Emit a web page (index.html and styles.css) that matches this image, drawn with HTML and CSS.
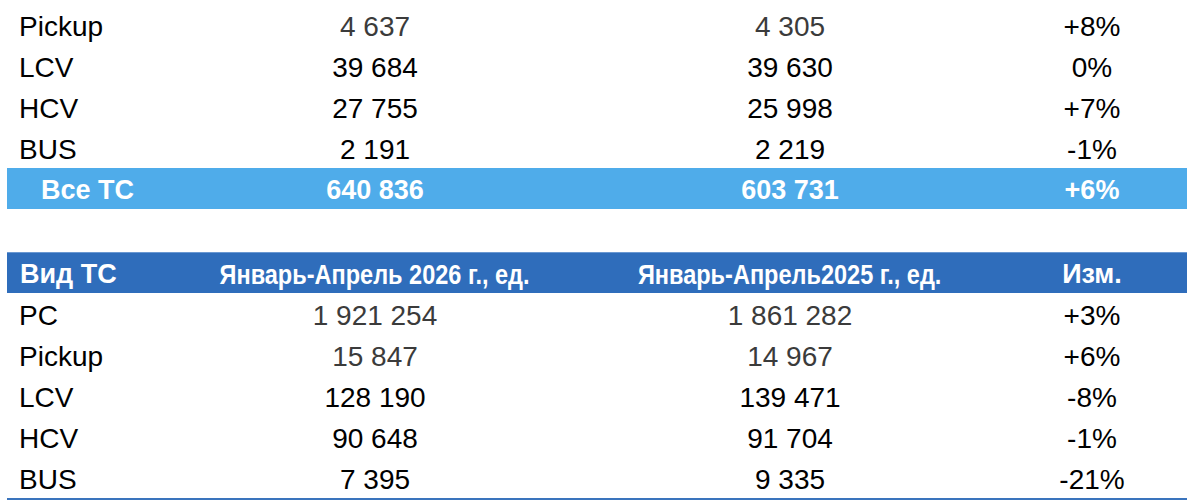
FILE: index.html
```html
<!DOCTYPE html>
<html lang="ru">
<head>
<meta charset="utf-8">
<title>Продажи ТС</title>
<link rel="stylesheet" href="styles.css">
</head>
<body>
<div class="page">
  <div class="table first">
    <div class="row"><div class="lbl">Pickup</div><div class="num grey">4 637</div><div class="num grey">4 305</div><div class="pct">+8%</div></div>
    <div class="row"><div class="lbl">LCV</div><div class="num">39 684</div><div class="num">39 630</div><div class="pct">0%</div></div>
    <div class="row"><div class="lbl">HCV</div><div class="num">27 755</div><div class="num">25 998</div><div class="pct">+7%</div></div>
    <div class="row"><div class="lbl">BUS</div><div class="num">2 191</div><div class="num">2 219</div><div class="pct">-1%</div></div>
    <div class="row total"><div class="lbl">Все ТС</div><div class="num">640 836</div><div class="num">603 731</div><div class="pct">+6%</div></div>
  </div>

  <div class="table second">
    <div class="row head"><div class="lbl">Вид ТС</div><div class="num"><span class="narrow">Январь-Апрель 2026 г., ед.</span></div><div class="num"><span class="narrow">Январь-Апрель2025 г., ед.</span></div><div class="pct">Изм.</div></div>
    <div class="row"><div class="lbl">PC</div><div class="num grey">1 921 254</div><div class="num grey">1 861 282</div><div class="pct">+3%</div></div>
    <div class="row"><div class="lbl">Pickup</div><div class="num grey">15 847</div><div class="num grey">14 967</div><div class="pct">+6%</div></div>
    <div class="row"><div class="lbl">LCV</div><div class="num">128 190</div><div class="num">139 471</div><div class="pct">-8%</div></div>
    <div class="row"><div class="lbl">HCV</div><div class="num">90 648</div><div class="num">91 704</div><div class="pct">-1%</div></div>
    <div class="row"><div class="lbl">BUS</div><div class="num">7 395</div><div class="num">9 335</div><div class="pct">-21%</div></div>
  </div>
</div>
</body>
</html>
```
FILE: styles.css
```css
html, body {
  margin: 0;
  padding: 0;
  background: #ffffff;
}

body {
  font-family: "Liberation Sans", Arial, Helvetica, sans-serif;
  color: #000000;
}

.page {
  width: 1180px;
  padding: 4px 0 0 7px;
  display: flex;
  flex-direction: column;
  gap: 43px;
}

.table {
  display: flex;
  flex-direction: column;
}

.second {
  border-bottom: 2px solid #3a74bd;
}

.row {
  display: grid;
  grid-template-columns: 180px 376px 454px 1fr;
  box-sizing: border-box;
  height: 41px;
  padding-top: 4px;
  font-size: 28px;
  line-height: 37px;
  white-space: nowrap;
}

.lbl {
  padding-left: 12px;
}

.num {
  text-align: center;
}

.pct {
  text-align: center;
  padding-right: 20px;
}

.grey {
  color: #3b3b3b;
}

.total {
  background: #4facea;
  color: #ffffff;
  font-weight: bold;
  font-size: 27px;
}

.total .lbl {
  padding-left: 34px;
}

.head {
  background: #2f6dbb;
  border-top: 1px solid #6a98d2;
  padding-top: 3px;
  color: #ffffff;
  font-weight: bold;
  font-size: 27px;
}

.head .lbl {
  padding-left: 13px;
}

.narrow {
  display: inline-block;
  font-size: 28px;
  transform: scaleX(0.84);
  transform-origin: center;
}
```
